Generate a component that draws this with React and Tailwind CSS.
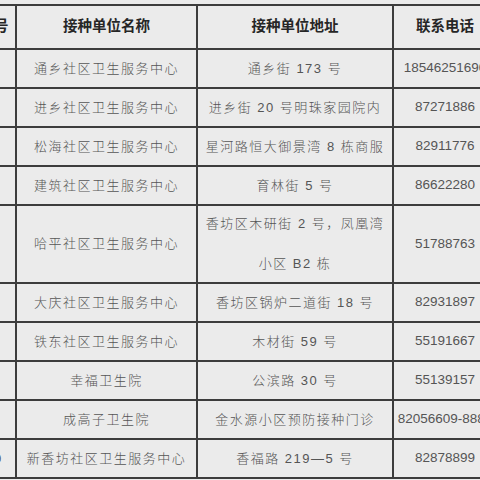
const rows = [
  ['1', '通乡社区卫生服务中心', ['通乡街 173 号'], '18546251690'],
  ['2', '进乡社区卫生服务中心', ['进乡街 20 号明珠家园院内'], '87271886'],
  ['3', '松海社区卫生服务中心', ['星河路恒大御景湾 8 栋商服'], '82911776'],
  ['4', '建筑社区卫生服务中心', ['育林街 5 号'], '86622280'],
  ['5', '哈平社区卫生服务中心', ['香坊区木研街 2 号，凤凰湾', '小区 B2 栋'], '51788763'],
  ['6', '大庆社区卫生服务中心', ['香坊区锅炉二道街 18 号'], '82931897'],
  ['7', '铁东社区卫生服务中心', ['木材街 59 号'], '55191667'],
  ['8', '幸福卫生院', ['公滨路 30 号'], '55139157'],
  ['9', '成高子卫生院', ['金水源小区预防接种门诊'], '82056609-8888'],
  ['10', '新香坊社区卫生服务中心', ['香福路 219—5 号'], '82878899'],
]

const cell = 'flex flex-col items-center justify-center shrink-0 border-r-2 border-[#3c3c3c] whitespace-nowrap'

export default function App() {
  return (
    <div
      className="w-[480px] h-[480px] overflow-hidden bg-[#ebebeb] pt-[4px]"
      style={{ fontFamily: '"Liberation Sans", "Noto Sans CJK SC", sans-serif' }}
    >
      <div className="-ml-[27px] w-[530px] border-t-2 border-[#3c3c3c]">
        <div className="flex h-[44px] border-b-2 border-[#3c3c3c] text-[14.5px] font-bold text-[#262626]">
          <div className={cell + ' w-[44px]'}>序号</div>
          <div className={cell + ' w-[181px]'}>接种单位名称</div>
          <div className={cell + ' w-[196px]'}>接种单位地址</div>
          <div className={cell + ' w-[104px]'}>联系电话</div>
        </div>
        {rows.map(([no, name, addr, tel]) => (
          <div
            key={no}
            className={
              'flex border-b-2 border-[#3c3c3c] text-[13px] text-[#555555] ' +
              (addr.length > 1 ? 'h-[78px]' : 'h-[39px]')
            }
          >
            <div className={cell + ' w-[44px]'}>{no}</div>
            <div className={cell + ' w-[181px] font-light tracking-[1.5px]'}>{name}</div>
            <div className={cell + ' w-[196px] font-light tracking-[1.5px]'}>
              {addr.map((line) => (
                <div key={line} className={addr.length > 1 ? 'leading-[40px]' : ''}>{line}</div>
              ))}
            </div>
            <div className={cell + ' w-[104px] text-[13.5px]'}>{tel}</div>
          </div>
        ))}
      </div>
    </div>
  )
}
